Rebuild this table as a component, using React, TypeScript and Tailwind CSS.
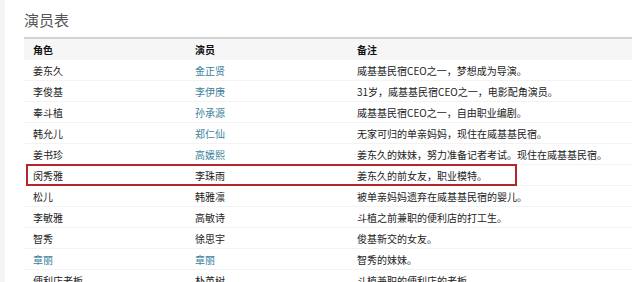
const rows: [string, string, string, boolean, boolean][] = [
  ['姜东久', '金正贤', '威基基民宿CEO之一，梦想成为导演。', false, true],
  ['李俊基', '李伊庚', '31岁，威基基民宿CEO之一，电影配角演员。', false, true],
  ['奉斗植', '孙承源', '威基基民宿CEO之一，自由职业编剧。', false, true],
  ['韩允儿', '郑仁仙', '无家可归的单亲妈妈，现住在威基基民宿。', false, true],
  ['姜书珍', '高媛熙', '姜东久的妹妹，努力准备记者考试。现住在威基基民宿。', false, true],
  ['闵秀雅', '李珠雨', '姜东久的前女友，职业模特。', false, false],
  ['松儿', '韩雅凛', '被单亲妈妈遗弃在威基基民宿的婴儿。', false, false],
  ['李敏雅', '高敏诗', '斗植之前兼职的便利店的打工生。', false, false],
  ['智秀', '徐思宇', '俊基新交的女友。', false, false],
  ['章丽', '章丽', '智秀的妹妹。', true, true],
  ['便利店老板', '朴英树', '斗植兼职的便利店的老板。', false, false],
];

export default function App() {
  return (
    <div
      className="h-[282px] w-[640px] overflow-hidden bg-white flex"
      style={{ fontFamily: '"Noto Sans CJK SC", "Noto Sans", sans-serif' }}
    >
      <div className="w-[5px] bg-[#f4f4f4] shrink-0" />
      <div className="flex-1 pl-[19px] pr-[8px]">
        <h2 className="mt-[10px] h-[27px] text-[15px] leading-[20px] text-[#555]">演员表</h2>
        <div className="relative text-[10px] text-[#222]">
          <div className="flex h-[23px] items-center border-t-2 border-[#d4d4d4] bg-[#f6f6f6] font-bold text-[#111]">
            <div className="w-[162px] pl-[9px]">角色</div>
            <div className="w-[162px] pl-[9px]">演员</div>
            <div className="flex-1 pl-[9px]">备注</div>
          </div>
          {rows.map(([role, actor, note, roleLink, actorLink]) => (
            <div key={role + note} className="flex h-[21px] items-center border-b border-[#f3f3f3]">
              <div className={`w-[162px] pl-[9px] ${roleLink ? 'text-[#3b7f9c]' : ''}`}>{role}</div>
              <div className={`w-[162px] pl-[9px] ${actorLink ? 'text-[#3b7f9c]' : ''}`}>{actor}</div>
              <div className="flex-1 pl-[9px] whitespace-nowrap">{note}</div>
            </div>
          ))}
          <div className="absolute left-[2px] top-[127px] h-[22px] w-[491px] border-2 border-[#b3262b]" />
        </div>
      </div>
    </div>
  );
}
